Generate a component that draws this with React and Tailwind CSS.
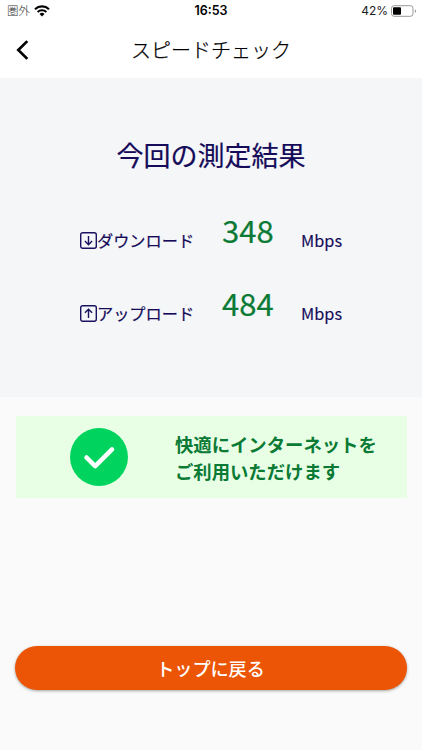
function WifiIcon() {
  return (
    <svg width="16" height="12" viewBox="0 0 16 12" fill="none" stroke="#000">
      <path d="M1 4.2a10.2 10.2 0 0 1 14 0" strokeWidth="2.2" />
      <path d="M3.6 6.9a6.4 6.4 0 0 1 8.8 0" strokeWidth="2" />
      <path d="M5.5 8.9a3.7 3.7 0 0 1 5 0L8 11.4z" fill="#000" stroke="none" />
    </svg>
  );
}

function Battery() {
  return (
    <svg width="26" height="12" viewBox="0 0 26 12" fill="none">
      <rect x="0.5" y="0.7" width="21.5" height="10.6" rx="2.6" stroke="#999" />
      <rect x="2" y="2.2" width="8" height="7.6" rx="1" fill="#000" />
      <path d="M23.9 4.2c1.6.5 1.6 3.1 0 3.6z" fill="#999" />
    </svg>
  );
}

function ArrowBox({ up }) {
  return (
    <svg width="17" height="17" viewBox="0 0 17 17" fill="none" stroke="#1a1160" strokeWidth="1.4">
      <rect x="0.7" y="0.7" width="15.6" height="15.6" rx="2" />
      {up ? <path d="M8.5 12.9V4.3M4.9 7.8l3.6-3.6 3.6 3.6" /> : <path d="M8.5 4v8.6M4.9 9.1l3.6 3.6 3.6-3.6" />}
    </svg>
  );
}

function Result({ up, label, value }) {
  return (
    <div className="flex h-[73px] items-start pl-20">
      <div className="flex w-[142px] items-center pt-[13px] text-[16.2px] leading-6">
        <ArrowBox up={up} />
        <span className="whitespace-nowrap [-webkit-text-stroke:0.2px_currentColor]">{label}</span>
      </div>
      <span className="-mt-[3px] w-[79px] text-[31px] leading-9 text-[#0b7a35] [-webkit-text-stroke:0.2px_currentColor]">{value}</span>
      <span className="pt-[13px] text-[16.3px] leading-6 [-webkit-text-stroke:0.15px_currentColor]">Mbps</span>
    </div>
  );
}

export default function App() {
  return (
    <div className="flex h-[750px] w-[422px] flex-col overflow-hidden bg-[#fafafa] font-['Noto_Sans_CJK_JP',sans-serif]">
      <div className="grid h-[22px] grid-cols-3 items-center bg-white font-['Inter','Noto_Sans_CJK_JP',sans-serif] text-[12px] leading-[22px] text-black">
        <div className="flex items-center gap-1 pl-[7px]">
          <span className="text-[11.5px] font-light text-[#333]">圏外</span>
          <WifiIcon />
        </div>
        <span className="text-center text-[12.5px] font-semibold">16:53</span>
        <div className="flex items-center justify-end gap-[3px] pr-[5px] text-[#222]">
          <span>42%</span>
          <Battery />
        </div>
      </div>
      <header className="grid h-14 grid-cols-[40px_1fr_40px] items-center bg-white">
        <svg className="ml-4" width="13" height="20" viewBox="0 0 13 20" fill="none" stroke="#000" strokeWidth="2.7">
          <path d="M11.3 1.1L2.3 10l9 8.9" />
        </svg>
        <h1 className="text-center text-[20px] leading-7 font-light text-black [-webkit-text-stroke:0.25px_currentColor]">スピードチェック</h1>
      </header>
      <section className="h-[319px] bg-[#f4f6f8] text-[#150b58]">
        <h2 className="pt-[57px] text-center text-[27px] leading-10 font-normal [-webkit-text-stroke:0.2px_currentColor]">今回の測定結果</h2>
        <div className="pt-[40px]">
          <Result label="ダウンロード" value="348" />
          <Result up label="アップロード" value="484" />
        </div>
      </section>
      <div className="mx-4 mt-[19px] flex h-[82px] w-[391px] items-center bg-[#e8ffe6] pl-[54px]">
        <svg width="58" height="58" viewBox="0 0 58 58" fill="none">
          <circle cx="29" cy="29" r="29" fill="#00d45e" />
          <path d="M16.5 29.5l8.7 8.7L42 21.3" stroke="#fff" strokeWidth="4.5" strokeLinecap="round" strokeLinejoin="round" />
        </svg>
        <p className="ml-[47px] pt-px text-[18.35px] leading-[27px] font-bold whitespace-nowrap text-[#0b7a35]">
          快適にインターネットを
          <br />
          ご利用いただけます
        </p>
      </div>
      <button className="mt-[148px] ml-[15px] h-11 w-[392px] rounded-full bg-[#eb5505] pt-0.5 pr-px text-[18.1px] font-medium text-white shadow-[0_1px_3px_rgba(0,0,0,0.35)]">
        トップに戻る
      </button>
    </div>
  );
}
